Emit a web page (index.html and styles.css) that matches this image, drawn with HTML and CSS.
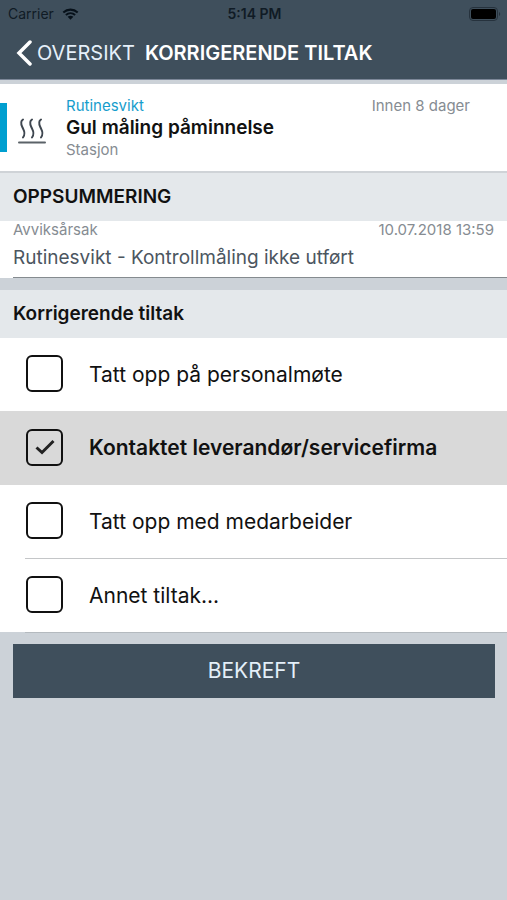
FILE: index.html
```html
<!DOCTYPE html>
<html lang="nb">
<head>
<meta charset="utf-8">
<meta name="viewport" content="width=device-width, initial-scale=1">
<title>Korrigerende tiltak</title>
<link rel="stylesheet" href="styles.css">
</head>
<body>
<header class="header">
  <div class="status">
    <span class="carrier">Carrier
      <svg class="wifi" viewBox="0 0 18 13" aria-hidden="true">
        <path d="M1.2 4.9C5.7.7 12.3.7 16.8 4.9M4 7.7c2.9-2.6 7.1-2.6 10 0" fill="none" stroke="currentColor" stroke-width="2.2"/>
        <path d="M5.9 9.6c1.8-1.6 4.4-1.6 6.2 0L9 12.8z" fill="currentColor"/>
      </svg>
    </span>
    <span class="clock">5:14 PM</span>
    <svg class="battery" viewBox="0 0 32 14" aria-hidden="true">
      <rect x=".5" y=".5" width="28" height="13" rx="3.5" fill="none" stroke="#26323d"/>
      <rect x="2" y="2" width="25" height="10" rx="2" fill="#000"/>
      <path d="M30 5c1.6.5 1.6 3.5 0 4z" fill="#26323d"/>
    </svg>
  </div>
  <nav class="nav">
    <a class="back" href="#">
      <svg class="chevron" viewBox="0 0 16 28" aria-hidden="true"><path d="M14 3 3 14l11 11" fill="none" stroke="currentColor" stroke-width="3.500" stroke-linecap="round" stroke-linejoin="miter"/></svg>
      OVERSIKT
    </a>
    <h1 class="title">KORRIGERENDE TILTAK</h1>
  </nav>
</header>

<main>
  <article class="card">
    <svg class="steam" viewBox="0 0 28 26" aria-hidden="true">
      <g fill="none" stroke="#3f4750" stroke-width="2" stroke-linecap="round">
        <path d="M5 1.500C2 3.500 3 6.500 4.500 9.500S8 15.500 5 19.500"/>
        <path d="M14 1.500c-3 2-2 5-.5 8S17 15.500 14 19.500"/>
        <path d="M23 1.500c-3 2-2 5-.5 8S26 15.500 23 19.500"/>
        <path d="M1 24.500h26" stroke="#5b6268"/>
      </g>
    </svg>
    <div class="card-body">
      <div class="card-top"><span class="kind">Rutinesvikt</span><span class="muted">Innen 8 dager</span></div>
      <h2 class="card-title">Gul måling påminnelse</h2>
      <div class="muted">Stasjon</div>
    </div>
  </article>

  <section>
    <h2 class="section-title summary-title">OPPSUMMERING</h2>
    <div class="field">
      <div class="field-top muted"><span>Avviksårsak</span><time datetime="2018-07-10T13:59">10.07.2018 13:59</time></div>
      <div class="field-value">Rutinesvikt - Kontrollmåling ikke utført</div>
    </div>
  </section>

  <form>
    <h2 class="section-title">Korrigerende tiltak</h2>
    <label class="option"><input class="box" type="checkbox"><span>Tatt opp på personalmøte</span></label>
    <label class="option selected"><input class="box" type="checkbox" checked><svg class="tick" viewBox="0 0 20 16" aria-hidden="true"><path d="M1.500 8.500 7 13.500 18.500 2" fill="none" stroke="#222" stroke-width="3"/></svg><span>Kontaktet leverandør/servicefirma</span></label>
    <label class="option"><input class="box" type="checkbox"><span>Tatt opp med medarbeider</span></label>
    <hr class="rule">
    <label class="option"><input class="box" type="checkbox"><span>Annet tiltak...</span></label>
    <div class="actions">
      <button class="confirm" type="button">BEKREFT</button>
    </div>
  </form>
</main>
</body>
</html>
```
FILE: styles.css
```css
* { box-sizing: border-box; }

body {
  margin: 0;
  min-height: 100vh;
  background: #ccd2d8;
  color: #111;
  font-family: Inter, "Liberation Sans", sans-serif;
  font-size: 15px;
  line-height: 18px;
}

h1, h2 { margin: 0; }

.header {
  background: #3f4f5c;
  border-bottom: 1px solid #7c8798;
}

.status {
  display: grid;
  grid-template-columns: 1fr auto 1fr;
  align-items: center;
  height: 27px;
  padding: 0 6px 0 8px;
  color: #101b25;
  font-size: 14px;
}

.carrier { display: flex; align-items: center; gap: 8px; }
.wifi { width: 17px; height: 12px; color: #07111a; }
.clock { font-weight: 600; }
.battery { width: 32px; height: 14px; justify-self: end; }

.nav {
  display: flex;
  align-items: center;
  gap: 10px;
  height: 52px;
  padding: 0 16px 1px;
  color: #fff;
  font-size: 20px;
  line-height: 24px;
}

.back {
  display: flex;
  align-items: center;
  gap: 5px;
  color: #e6f0fa;
  text-decoration: none;
}

.chevron { width: 16px; height: 28px; color: #fff; }
.title { font-size: 20px; font-weight: 600; }

.card {
  display: flex;
  align-items: center;
  gap: 20px;
  height: 87px;
  margin-top: 4px;
  background: linear-gradient(#009fd0, #009fd0) 0 19px / 7px 49px no-repeat #fff;
  padding: 1px 37px 0 18px;
}

.steam { flex: none; width: 28px; height: 26px; margin-top: 5px; }
.card-body { flex: 1; }
.card-top { display: flex; justify-content: space-between; }
.kind { color: #169dcc; }
.muted { color: #868c92; }
.card-title { font-size: 19px; font-weight: 600; line-height: 26px; }

.section-title {
  padding: 12px 13px;
  background: #e4e8eb;
  font-size: 19px;
  font-weight: 600;
  line-height: 24px;
}

.summary-title { border-top: 2px solid #cfd3d7; }

.field {
  margin-bottom: 12px;
  padding-left: 13px;
  background: #fff;
}

.field-top {
  display: flex;
  justify-content: space-between;
  padding-right: 13px;
}

.field-value {
  padding: 7px 0;
  border-bottom: 1px solid #858b8f;
  color: #4c565f;
  font-size: 19px;
  line-height: 24px;
}

.option {
  position: relative;
  display: flex;
  align-items: center;
  gap: 26px;
  min-height: 73px;
  padding: 0 26px;
  background: #fff;
  font-size: 21px;
  line-height: 26px;
}

.box {
  appearance: none;
  flex: none;
  width: 37px;
  height: 37px;
  margin: 0 0 2px;
  border: 2px solid #111;
  border-radius: 6px;
}

.selected {
  min-height: 74px;
  background: #d9d9d9;
  font-weight: 600;
}

.tick {
  position: absolute;
  left: 35px;
  width: 20px;
  height: 16px;
  margin-bottom: 2px;
}

.rule {
  height: 1px;
  margin: 0;
  border: 0;
  background: linear-gradient(#c4c6c8, #c4c6c8) 25px 0 no-repeat #fff;
}

.actions {
  padding: 12px 12px 0 13px;
  background: linear-gradient(#b4babf, #b4babf) 25px 0 / 100% 1px no-repeat;
}

.confirm {
  display: block;
  width: 100%;
  height: 54px;
  border: 0;
  background: #3f4f5c;
  color: #e4eff9;
  font: inherit;
  font-size: 21px;
}
```
